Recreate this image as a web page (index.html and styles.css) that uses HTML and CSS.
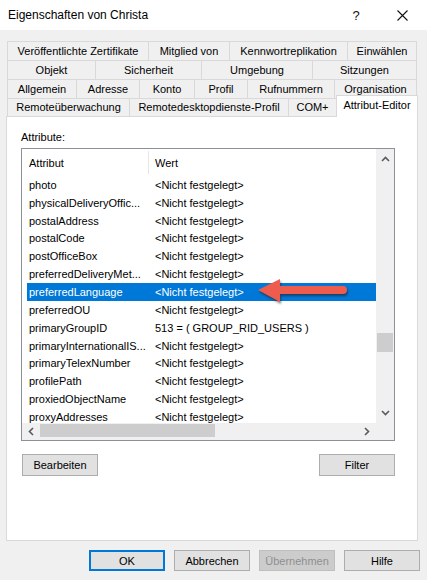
FILE: index.html
```html
<!DOCTYPE html>
<html lang="de">
<head>
<meta charset="utf-8">
<title>Eigenschaften von Christa</title>
<link rel="stylesheet" href="styles.css">
</head>
<body>
<div class="window">
  <div class="titlebar">
    <span class="title">Eigenschaften von Christa</span>
    <span class="tb-btn tb-help">?</span>
    <span class="tb-btn tb-close">
      <svg width="11" height="11" viewBox="0 0 11 11"><path d="M0.5 0.5 L10.5 10.5 M10.5 0.5 L0.5 10.5" stroke="#111" stroke-width="1.1" fill="none"/></svg>
    </span>
  </div>

  <div class="main">
    <div class="tabs">
      <div class="tabrow">
        <div class="tab first w142">Veröffentlichte Zertifikate</div>
        <div class="tab w81">Mitglied von</div>
        <div class="tab w118">Kennwortreplikation</div>
        <div class="tab w69">Einwählen</div>
      </div>
      <div class="tabrow">
        <div class="tab first w89">Objekt</div>
        <div class="tab w106">Sicherheit</div>
        <div class="tab w111">Umgebung</div>
        <div class="tab w104">Sitzungen</div>
      </div>
      <div class="tabrow">
        <div class="tab first w70">Allgemein</div>
        <div class="tab w63">Adresse</div>
        <div class="tab w55">Konto</div>
        <div class="tab w53">Profil</div>
        <div class="tab w87">Rufnummern</div>
        <div class="tab w82">Organisation</div>
      </div>
      <div class="tabrow last">
        <div class="tab first w123">Remoteüberwachung</div>
        <div class="tab w159">Remotedesktopdienste-Profil</div>
        <div class="tab w48">COM+</div>
        <div class="tab active">Attribut-Editor</div>
      </div>
    </div>

    <div class="panel">
      <div class="label">Attribute:</div>
      <div class="list">
        <div class="viewport">
          <div class="header">
            <div class="h1">Attribut</div>
            <div class="hsep"></div>
            <div class="h2">Wert</div>
          </div>
          <div class="rows">
            <div class="row"><span class="c1">photo</span><span class="c2">&lt;Nicht festgelegt&gt;</span></div>
            <div class="row"><span class="c1">physicalDeliveryOffic...</span><span class="c2">&lt;Nicht festgelegt&gt;</span></div>
            <div class="row"><span class="c1">postalAddress</span><span class="c2">&lt;Nicht festgelegt&gt;</span></div>
            <div class="row"><span class="c1">postalCode</span><span class="c2">&lt;Nicht festgelegt&gt;</span></div>
            <div class="row"><span class="c1">postOfficeBox</span><span class="c2">&lt;Nicht festgelegt&gt;</span></div>
            <div class="row"><span class="c1">preferredDeliveryMet...</span><span class="c2">&lt;Nicht festgelegt&gt;</span></div>
            <div class="row selected"><span class="c1">preferredLanguage</span><span class="c2">&lt;Nicht festgelegt&gt;</span>
              <svg class="arrow" width="96" height="34" viewBox="0 0 96 34"><path d="M2 15 L24 4 L24 11 L87 11 A4 4 0 0 1 87 19 L24 19 L24 27 Z" fill="#ee5c4d"/></svg>
            </div>
            <div class="row"><span class="c1">preferredOU</span><span class="c2">&lt;Nicht festgelegt&gt;</span></div>
            <div class="row"><span class="c1">primaryGroupID</span><span class="c2">513 = ( GROUP_RID_USERS )</span></div>
            <div class="row"><span class="c1">primaryInternationalIS...</span><span class="c2">&lt;Nicht festgelegt&gt;</span></div>
            <div class="row"><span class="c1">primaryTelexNumber</span><span class="c2">&lt;Nicht festgelegt&gt;</span></div>
            <div class="row"><span class="c1">profilePath</span><span class="c2">&lt;Nicht festgelegt&gt;</span></div>
            <div class="row"><span class="c1">proxiedObjectName</span><span class="c2">&lt;Nicht festgelegt&gt;</span></div>
            <div class="row"><span class="c1">proxyAddresses</span><span class="c2">&lt;Nicht festgelegt&gt;</span></div>
          </div>
        </div>
        <div class="vscroll">
          <div class="sb-btn vbtn">
            <svg width="9" height="6" viewBox="0 0 9 6"><polyline points="1,5 4.5,1.5 8,5" fill="none" stroke="#5a5a5a" stroke-width="1.6"/></svg>
          </div>
          <div class="vtrack"><div class="vthumb"></div></div>
          <div class="sb-btn vbtn">
            <svg width="9" height="6" viewBox="0 0 9 6"><polyline points="1,1 4.5,4.5 8,1" fill="none" stroke="#5a5a5a" stroke-width="1.6"/></svg>
          </div>
        </div>
        <div class="hscroll">
          <div class="sb-btn hbtn">
            <svg width="6" height="9" viewBox="0 0 6 9"><polyline points="5,1 1.5,4.5 5,8" fill="none" stroke="#5a5a5a" stroke-width="1.6"/></svg>
          </div>
          <div class="htrack"><div class="hthumb"></div></div>
          <div class="sb-btn hbtn">
            <svg width="6" height="9" viewBox="0 0 6 9"><polyline points="1,1 4.5,4.5 1,8" fill="none" stroke="#5a5a5a" stroke-width="1.6"/></svg>
          </div>
        </div>
        <div class="corner"></div>
      </div>
      <div class="panel-buttons">
        <button class="btn">Bearbeiten</button>
        <button class="btn">Filter</button>
      </div>
    </div>

    <div class="footer">
      <button class="btn default">OK</button>
      <button class="btn">Abbrechen</button>
      <button class="btn disabled">Übernehmen</button>
      <button class="btn">Hilfe</button>
    </div>
  </div>
</div>
</body>
</html>
```

FILE: styles.css
```css
html, body {
  margin: 0;
  padding: 0;
}
body {
  width: 427px;
  height: 580px;
  overflow: hidden;
  background: #f0f0f0;
  font-family: "Liberation Sans", Arial, sans-serif;
  font-size: 11px;
  color: #000;
}
.window {
  width: 427px;
  height: 580px;
}

/* title bar */
.titlebar {
  height: 30px;
  background: #fff;
  display: flex;
  align-items: center;
  padding-left: 8px;
  padding-right: 2px;
  box-sizing: border-box;
}
.title {
  font-size: 12px;
  color: #000;
  flex: 1;
}
.tb-btn {
  width: 46px;
  height: 30px;
  display: flex;
  align-items: center;
  justify-content: center;
}
.tb-help {
  font-size: 13px;
  color: #111;
}

/* main area */
.main {
  padding: 11px 9px 0 6px;
}
.tabs {
  margin-left: 1px;
}
.tabrow {
  display: flex;
  height: 19px;
}
.tabrow.last {
  height: 18px;
}
.tab {
  box-sizing: border-box;
  height: 100%;
  border-top: 1px solid #d9d9d9;
  border-right: 1px solid #d9d9d9;
  display: flex;
  align-items: center;
  justify-content: center;
  white-space: nowrap;
  background: #f0f0f0;
  padding-bottom: 1px;
}
.tab.first {
  border-left: 1px solid #d9d9d9;
}
.tab.active {
  position: relative;
  z-index: 2;
  width: 82px;
  height: 22px;
  margin-top: -3px;
  margin-left: -1px;
  background: #fff;
  border-left: 1px solid #d9d9d9;
  align-items: flex-start;
  padding-top: 3px;
}
.w142 { width: 142px; }
.w81 { width: 81px; }
.w118 { width: 118px; }
.w69 { width: 69px; }
.w89 { width: 89px; }
.w106 { width: 106px; }
.w111 { width: 111px; }
.w104 { width: 104px; }
.w70 { width: 70px; }
.w63 { width: 63px; }
.w55 { width: 55px; }
.w53 { width: 53px; }
.w87 { width: 87px; }
.w82 { width: 82px; }
.w123 { width: 123px; }
.w159 { width: 159px; }
.w48 { width: 48px; }

/* panel */
.panel {
  box-sizing: border-box;
  width: 412px;
  height: 425px;
  background: #fff;
  border: 1px solid #d9d9d9;
  padding: 13px 0 0 14px;
}
.label {
  line-height: 14px;
  height: 14px;
}
.list {
  box-sizing: border-box;
  margin-top: 4px;
  width: 374px;
  height: 293px;
  border: 1px solid #8c9097;
  display: grid;
  grid-template-columns: 354px 18px;
  grid-template-rows: 274px 17px;
  background: #fff;
}
.viewport {
  overflow: hidden;
  position: relative;
}
.header {
  height: 27px;
  display: flex;
  align-items: center;
}
.h1 {
  width: 119px;
  padding-left: 7px;
}
.hsep {
  width: 1px;
  height: 23px;
  background: #e5e5e5;
}
.h2 {
  padding-left: 6px;
}
.rows {
  margin-left: 5px;
}
.row {
  position: relative;
  height: 17.85px;
  display: flex;
  align-items: center;
  padding-left: 2px;
  white-space: nowrap;
}
.c1 {
  width: 126px;
  overflow: hidden;
}
.row.selected {
  background: #0078d7;
  color: #fff;
}
.arrow {
  position: absolute;
  left: 229px;
  top: -8px;
  z-index: 3;
  filter: drop-shadow(1px 2px 1px rgba(40, 20, 20, 0.55));
}

/* scrollbars */
.vscroll {
  background: #f0f0f0;
  display: flex;
  flex-direction: column;
}
.sb-btn {
  display: flex;
  align-items: center;
  justify-content: center;
}
.vbtn {
  height: 20px;
}
.vtrack {
  flex: 1;
}
.vthumb {
  margin: 164px 1px 0 1px;
  height: 19px;
  background: #cdcdcd;
}
.hscroll {
  background: #f0f0f0;
  display: flex;
}
.hbtn {
  width: 18px;
}
.htrack {
  flex: 1;
}
.hthumb {
  width: 175px;
  height: 13px;
  margin-top: 1px;
  background: #cdcdcd;
}
.corner {
  background: #f0f0f0;
}

/* buttons */
.btn {
  box-sizing: border-box;
  width: 76px;
  height: 22px;
  margin: 0;
  padding: 0;
  background: #e1e1e1;
  border: 1px solid #adadad;
  font-family: "Liberation Sans", Arial, sans-serif;
  font-size: 11px;
  color: #000;
}
.panel-buttons {
  margin-top: 13px;
  width: 373px;
  padding-left: 1px;
  display: flex;
  justify-content: space-between;
}
.footer {
  display: flex;
  justify-content: flex-end;
  gap: 9px;
  padding-top: 9px;
  margin-right: -2px;
}
.footer .btn {
  height: 21px;
}
.btn.default {
  border: 2px solid #0078d7;
}
.btn.disabled {
  background: #cccccc;
  border-color: #bfbfbf;
  color: #8f8f8f;
}
```
